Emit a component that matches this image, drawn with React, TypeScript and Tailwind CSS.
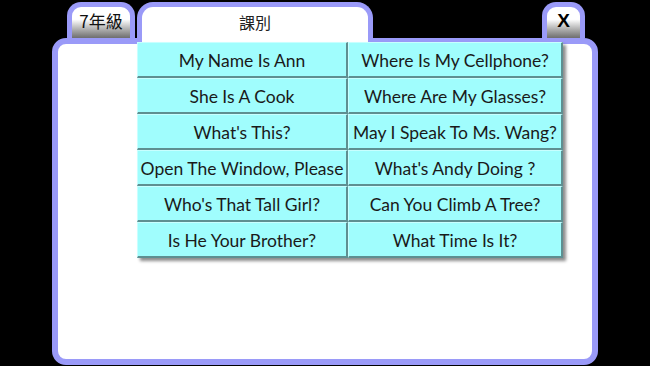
const lessons: [string, string][] = [
  ["My Name Is Ann", "Where Is My Cellphone?"],
  ["She Is A Cook", "Where Are My Glasses?"],
  ["What's This?", "May I Speak To Ms. Wang?"],
  ["Open The Window, Please", "What's Andy Doing ?"],
  ["Who's That Tall Girl?", "Can You Climb A Tree?"],
  ["Is He Your Brother?", "What Time Is It?"],
];

function LessonButton({ label }: { label: string }) {
  return (
    <button className="flex h-[36px] items-center justify-center border-b-2 border-r-2 border-[#5e8f91] border-t border-l border-t-[#c8ffff] border-l-[#c8ffff] bg-[#a0fdfd] pt-[3px] text-[17.5px] text-[#1a1a1a] whitespace-nowrap">
      {label}
    </button>
  );
}

export default function App() {
  return (
    <div className="h-[366px] w-[650px] overflow-hidden bg-black font-['Lato',sans-serif]">
      <div className="ml-[52px] w-[546px] pt-[2px]">
        <div className="relative z-10 flex items-end">
          <div className="ml-[15px] flex h-[36px] w-[68px] items-start justify-center rounded-t-[14px] border-x-[5px] border-t-[5px] border-[#9a9af8] bg-gradient-to-b from-white from-40% to-[#6e6e6e] pt-[3px] font-['Noto_Sans_CJK_TC',sans-serif] text-[17px] leading-[22px] text-[#111]">
            7年級
          </div>
          <div className="-mb-[6px] ml-[2px] flex h-[42px] w-[236px] items-start justify-center rounded-t-[16px] border-x-[5px] border-t-[5px] border-[#9a9af8] bg-white pt-[5px] font-['Noto_Sans_CJK_TC',sans-serif] text-[16px] leading-[20px] text-[#222]">
            課別
          </div>
          <div className="ml-[169px] flex h-[36px] w-[43px] items-start justify-center rounded-t-[14px] border-x-[5px] border-t-[5px] border-[#9a9af8] bg-gradient-to-b from-white from-40% to-[#6e6e6e] pt-[3px] font-['Liberation_Sans',sans-serif] text-[19px] font-bold leading-[22px] text-black">
            X
          </div>
        </div>
        <div className="h-[327px] rounded-[14px] border-[6px] border-[#9a9af8] bg-white">
          <div className="relative z-20 -mt-[2px] ml-[79px] grid w-[426px] grid-cols-[211px_215px] shadow-[3px_3px_3px_rgba(0,0,0,0.45)]">
            {lessons.map(([a, b]) => (
              <>
                <LessonButton key={a} label={a} />
                <LessonButton key={b} label={b} />
              </>
            ))}
          </div>
        </div>
      </div>
    </div>
  );
}
